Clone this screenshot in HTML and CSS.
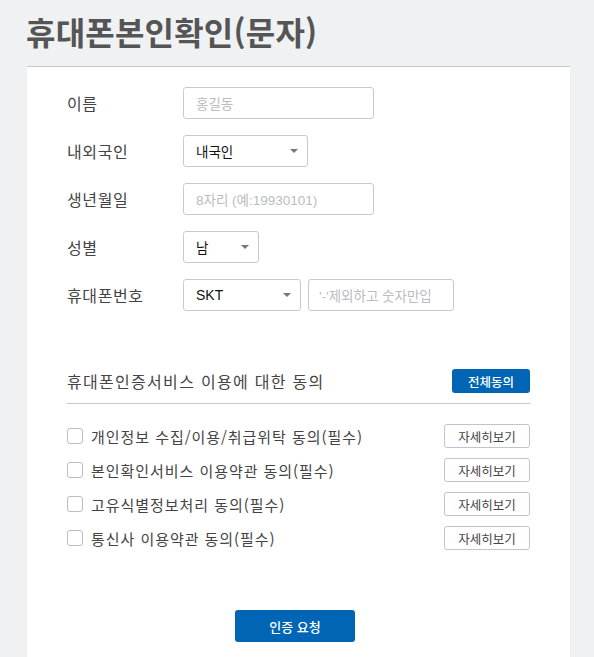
FILE: index.html
```html
<!DOCTYPE html>
<html lang="ko">
<head>
<meta charset="utf-8">
<title>휴대폰본인확인(문자)</title>
<link rel="stylesheet" href="styles.css">
</head>
<body>
<h1 class="title">휴대폰본인확인(문자)</h1>
<div class="card">
  <div class="form">
    <div class="row">
      <span class="label">이름</span>
      <div class="input w-190"><span class="ph">홍길동</span></div>
    </div>
    <div class="row">
      <span class="label">내외국인</span>
      <div class="select w-124"><span class="val">내국인</span><span class="caret"></span></div>
    </div>
    <div class="row">
      <span class="label">생년월일</span>
      <div class="input w-190"><span class="ph">8자리 (예:19930101)</span></div>
    </div>
    <div class="row">
      <span class="label">성별</span>
      <div class="select w-75"><span class="val">남</span><span class="caret"></span></div>
    </div>
    <div class="row">
      <span class="label">휴대폰번호</span>
      <div class="select w-117"><span class="val latin">SKT</span><span class="caret"></span></div>
      <div class="input w-145 ml-8"><span class="ph">'-'제외하고 숫자만입</span></div>
    </div>
  </div>

  <div class="consent-head">
    <span class="consent-title">휴대폰인증서비스 이용에 대한 동의</span>
    <button class="btn-all">전체동의</button>
  </div>

  <ul class="consent-list">
    <li class="consent-item"><span class="check"></span><span class="item-text">개인정보 수집/이용/취급위탁 동의(필수)</span><button class="btn-detail">자세히보기</button></li>
    <li class="consent-item"><span class="check"></span><span class="item-text">본인확인서비스 이용약관 동의(필수)</span><button class="btn-detail">자세히보기</button></li>
    <li class="consent-item"><span class="check"></span><span class="item-text">고유식별정보처리 동의(필수)</span><button class="btn-detail">자세히보기</button></li>
    <li class="consent-item"><span class="check"></span><span class="item-text">통신사 이용약관 동의(필수)</span><button class="btn-detail">자세히보기</button></li>
  </ul>

  <div class="submit-wrap">
    <button class="btn-submit">인증 요청</button>
  </div>
</div>
</body>
</html>
```

FILE: styles.css
```css
html, body {
  margin: 0;
  padding: 0;
}
body {
  background: #f0f1f3;
  font-family: "Noto Sans CJK KR", sans-serif;
  color: #333;
  width: 594px;
  height: 657px;
  overflow: hidden;
  display: flex;
  flex-direction: column;
}
.title {
  margin: 0;
  padding: 9px 0 0 26px;
  height: 66px;
  box-sizing: border-box;
  font-size: 32px;
  line-height: 44px;
  font-weight: 700;
  color: #555;
  letter-spacing: 0.2px;
  flex: none;
}
.card {
  flex: 1;
  margin: 0 24px 0 27px;
  background: #fff;
  border-top: 1px solid #c6c7cf;
  padding: 20px 40px 0 40px;
}
.form {
  display: flex;
  flex-direction: column;
  gap: 16px;
}
.row {
  display: flex;
  align-items: center;
  height: 32px;
}
.label {
  width: 116px;
  font-size: 16px;
  color: #444;
  letter-spacing: 0.6px;
}
.input, .select {
  box-sizing: border-box;
  height: 32px;
  border: 1px solid #c9cacf;
  border-radius: 3px;
  display: flex;
  align-items: center;
  padding-left: 12px;
  background: #fff;
}
.ph {
  font-family: "Liberation Sans", "Noto Sans CJK KR", sans-serif;
  font-size: 13.5px;
  color: #bbbcc2;
}
.val {
  font-family: "Liberation Sans", "Noto Sans CJK KR", sans-serif;
  font-size: 13.5px;
  color: #111;
  flex: 1;
}
.val.latin {
  font-size: 14px;
}
.caret {
  width: 0;
  height: 0;
  border-left: 4px solid transparent;
  border-right: 4px solid transparent;
  border-top: 4px solid #777;
  margin-right: 9px;
}
.w-190 { width: 191px; }
.w-124 { width: 125px; }
.w-75 { width: 76px; }
.w-117 { width: 118px; }
.w-145 { width: 146px; padding-left: 10px; }
.ml-8 { margin-left: 7px; }

.consent-head {
  margin-top: 58px;
  display: flex;
  align-items: center;
  justify-content: space-between;
  height: 24px;
  padding-bottom: 10px;
  border-bottom: 1px solid #c6c7cf;
}
.consent-title {
  font-size: 16px;
  color: #444;
  letter-spacing: 1.3px;
}
.btn-all {
  width: 78px;
  height: 24px;
  border: 0;
  border-radius: 3px;
  background: #0065b5;
  color: #fff;
  font-family: "Noto Sans CJK KR", sans-serif;
  font-size: 12.5px;
  font-weight: 500;
  padding: 0;
}
.consent-list {
  list-style: none;
  margin: 20px 0 0 0;
  padding: 0;
  display: flex;
  flex-direction: column;
  gap: 10px;
}
.consent-item {
  display: flex;
  align-items: center;
  height: 24px;
}
.check {
  box-sizing: border-box;
  width: 16px;
  height: 16px;
  border: 1px solid #bcbdc3;
  border-radius: 3px;
  background: #fff;
  margin-right: 8px;
}
.item-text {
  flex: 1;
  font-size: 15px;
  color: #444;
  letter-spacing: 0.95px;
}
.btn-detail {
  box-sizing: border-box;
  width: 86px;
  height: 24px;
  border: 1px solid #c3c4ca;
  border-radius: 3px;
  background: #fff;
  color: #444;
  font-family: "Noto Sans CJK KR", sans-serif;
  font-size: 12.5px;
  padding: 0;
}
.submit-wrap {
  margin-top: 60px;
  display: flex;
}
.btn-submit {
  margin-left: 168px;
  width: 120px;
  height: 32px;
  border: 0;
  border-radius: 3px;
  background: #0065b5;
  color: #fff;
  font-family: "Noto Sans CJK KR", sans-serif;
  font-size: 13px;
  font-weight: 500;
  padding: 0;
}
```
